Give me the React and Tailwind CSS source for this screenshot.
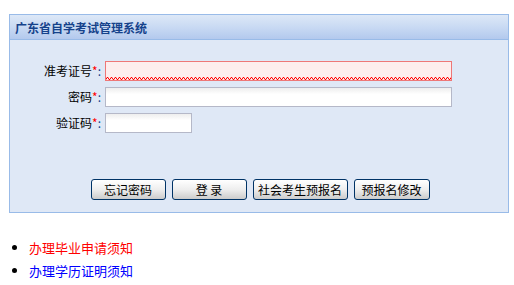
import React from 'react';

const font = { fontFamily: '"Noto Sans CJK SC", "Liberation Sans", sans-serif' };

function Label({ children }) {
  return (
    <div className="w-[95px] text-right text-[12px] text-[#000] pr-[4px] leading-[20px]">
      {children}
      <span className="text-[#ff0000]">*</span>
      <span className="text-[#15428b]">:</span>
    </div>
  );
}

function Btn({ children, w }) {
  return (
    <button
      className={`${w} h-[21px] rounded-[3px] border border-[#003366] bg-gradient-to-b from-[#ffffff] via-[#eeeeee] to-[#cccccc] text-[12px] leading-[18px] text-[#000] flex items-center justify-center`}
    >
      {children}
    </button>
  );
}

export default function App() {
  return (
    <div className="min-h-screen bg-white pt-[14px]" style={font}>
      {/* Login panel */}
      <div className="ml-[9px] w-[500px] border border-[#99bbe8] bg-[#dfe8f6]">
        <div className="h-[25px] border-b border-[#99bbe8] bg-gradient-to-b from-[#dde8f7] via-[#c9daf3] to-[#b3c9ed] pl-[5px] text-[12px] font-bold leading-[25px] text-[#15428b]">
          广东省自学考试管理系统
        </div>

        <div className="pt-[21px] pb-[12px]">
          <div className="flex flex-col gap-[6px]">
            <div className="flex items-center">
              <Label>准考证号</Label>
              <div className="relative h-[20px] w-[347px] border border-[#ee7777] bg-[#fdeded]">
                <svg className="absolute bottom-0 left-0" width="345" height="3">
                  <defs>
                    <pattern id="wave" width="4" height="3" patternUnits="userSpaceOnUse">
                      <path d="M0 2.5 L1 0.5 L2 0.5 L3 2.5 L4 2.5" stroke="#ff0000" strokeWidth="1" fill="none" />
                    </pattern>
                  </defs>
                  <rect width="345" height="3" fill="url(#wave)" />
                </svg>
              </div>
            </div>
            <div className="flex items-center">
              <Label>密码</Label>
              <div className="h-[20px] w-[347px] border border-[#b5b8c8] bg-gradient-to-b from-[#eeeeee] to-[#ffffff] to-[35%]" />
            </div>
            <div className="flex items-center">
              <Label>验证码</Label>
              <div className="h-[20px] w-[87px] border border-[#b5b8c8] bg-gradient-to-b from-[#eeeeee] to-[#ffffff] to-[35%]" />
            </div>
          </div>

          <div className="mt-[46px] flex justify-center gap-[6px] pl-[2px]">
            <Btn w="w-[75px]">忘记密码</Btn>
            <Btn w="w-[75px]">登&nbsp;录</Btn>
            <Btn w="w-[95px]">社会考生预报名</Btn>
            <Btn w="w-[76px]">预报名修改</Btn>
          </div>
        </div>
      </div>

      {/* Notice links */}
      <ul className="mt-[23px] ml-[29px] list-disc text-[13px] leading-[23px] marker:text-black">
        <li className="text-[#ff0000]">办理毕业申请须知</li>
        <li className="text-[#0000ff]">办理学历证明须知</li>
      </ul>
    </div>
  );
}
